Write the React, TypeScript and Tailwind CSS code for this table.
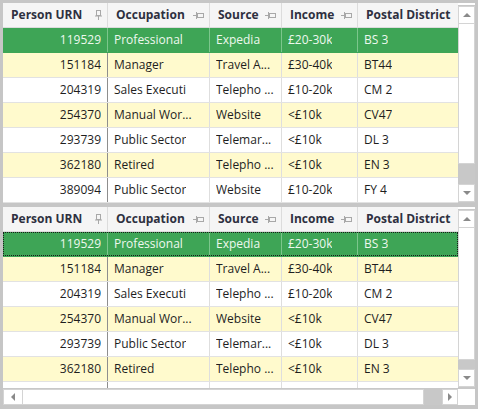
import React from "react";

const rows = [
  ["119529", "Professional", "Expedia", "£20-30k", "BS 3"],
  ["151184", "Manager", "Travel A...", "£30-40k", "BT44"],
  ["204319", "Sales Executi", "Telepho ...", "£10-20k", "CM 2"],
  ["254370", "Manual Wor...", "Website", "<£10k", "CV47"],
  ["293739", "Public Sector", "Telemar...", "<£10k", "DL 3"],
  ["362180", "Retired", "Telepho ...", "<£10k", "EN 3"],
  ["389094", "Public Sector", "Website", "£10-20k", "FY 4"],
];

const columns = [
  { title: "Person URN", width: "w-[105px]", pinned: true },
  { title: "Occupation", width: "w-[102px]", pinned: false },
  { title: "Source", width: "w-[72px]", pinned: false },
  { title: "Income", width: "w-[76px]", pinned: false },
  { title: "Postal District", width: "w-[112px]", pinned: false },
];

const font = { fontFamily: '"Open Sans", "Noto Sans", sans-serif' };

const PinDown = () => (
  <svg width="7" height="10" viewBox="0 0 7 10" className="shrink-0">
    <rect x="1.5" y="0.5" width="4" height="5" fill="none" stroke="#a8a8a8" />
    <line x1="0" y1="6" x2="7" y2="6" stroke="#a8a8a8" />
    <line x1="3.5" y1="6" x2="3.5" y2="10" stroke="#a8a8a8" />
  </svg>
);

const PinSide = () => (
  <svg width="11" height="7" viewBox="0 0 11 7" className="shrink-0">
    <line x1="0" y1="3.5" x2="3" y2="3.5" stroke="#a8a8a8" />
    <line x1="3.5" y1="0" x2="3.5" y2="7" stroke="#a8a8a8" />
    <rect x="4.5" y="1.5" width="6" height="4" fill="none" stroke="#a8a8a8" />
  </svg>
);

const Arrow = ({ dir }: { dir: "up" | "down" | "left" | "right" }) => {
  const pts = {
    up: "0,4 4,0 8,4",
    down: "0,0 8,0 4,4",
    left: "4,0 4,8 0,4",
    right: "0,0 4,4 0,8",
  }[dir];
  const vertical = dir === "up" || dir === "down";
  return (
    <svg width={vertical ? 8 : 4} height={vertical ? 4 : 8} viewBox={vertical ? "0 0 8 4" : "0 0 4 8"}>
      <polygon points={pts} fill="#8a8a8a" />
    </svg>
  );
};

const Header = () => (
  <div className="flex h-[25px] shrink-0 border-b border-[#dcdcdc] bg-[#f5f5f5]">
    {columns.map((c) => (
      <div
        key={c.title}
        className={`${c.width} shrink-0 flex items-center justify-between pl-[8px] pr-[5px] border-r border-[#dcdcdc] text-[12px] font-bold text-[#2e3040]`}
      >
        <span className="whitespace-nowrap">{c.title}</span>
        {c.title !== "Postal District" && (c.pinned ? <PinDown /> : <PinSide />)}
      </div>
    ))}
  </div>
);

const Row = ({ r, i, focused }: { r: string[]; i: number; focused?: boolean }) => {
  const selected = i === 0;
  const bg = selected ? "bg-[#3ea556]" : i % 2 === 1 ? "bg-[#fffacd]" : "bg-white";
  const text = selected ? "text-[#eef8ee]" : "text-[#1e1e1e]";
  const line = selected ? "border-[#7cc68c]" : "border-[#dedede]";
  return (
    <div
      className={`relative flex h-[25px] shrink-0 border-b ${selected ? "border-[#3ea556]" : "border-[#e2e2e2]"} ${bg} ${text} text-[12px]`}
    >
      {r.map((v, j) => (
        <div
          key={j}
          className={`${columns[j].width} shrink-0 flex items-center px-[6px] border-r ${
            j === 0 ? (selected ? "border-[#7cc68c]" : "border-[#8e8e8e]") : line
          } ${j === 0 ? "justify-end" : ""}`}
        >
          <span className="overflow-hidden whitespace-nowrap">{v}</span>
        </div>
      ))}
      {focused && (
        <div className="absolute inset-0 border border-dotted border-[#1a1a1a]" />
      )}
    </div>
  );
};

const VScroll = ({ thumbEnd }: { thumbEnd: string }) => (
  <div className="w-[17px] shrink-0 flex flex-col bg-[#c8c8c8]">
    <div className="h-[2px] shrink-0 bg-white" />
    <div className="h-[18px] mt-[1px] shrink-0 bg-white border border-[#d4d4d4] flex items-center justify-center">
      <Arrow dir="up" />
    </div>
    <div className={`${thumbEnd} shrink-0 bg-white border-x border-b border-[#d4d4d4]`} />
    <div className="flex-1" />
    <div className="h-[18px] shrink-0 bg-white border border-[#d4d4d4] flex items-center justify-center mb-[1px]">
      <Arrow dir="down" />
    </div>
  </div>
);

const Grid1 = () => (
  <div className="flex h-[200px] bg-white">
    <div className="flex-1 overflow-hidden flex flex-col">
      <Header />
      {rows.map((r, i) => (
        <Row key={i} r={r} i={i} />
      ))}
    </div>
    <VScroll thumbEnd="h-[140px]" />
  </div>
);

const Grid2 = () => (
  <div className="flex flex-col h-[198px] bg-white">
    <div className="flex flex-1 min-h-0">
      <div className="flex-1 overflow-hidden flex flex-col">
        <Header />
        {rows.map((r, i) => (
          <Row key={i} r={r} i={i} focused={i === 0} />
        ))}
      </div>
      <VScroll thumbEnd="h-[132px]" />
    </div>
    <div className="flex h-[17px] shrink-0 bg-[#c8c8c8] border-t border-[#c8c8c8]">
      <div className="w-[20px] shrink-0 bg-white border border-[#d4d4d4] flex items-center justify-center">
        <Arrow dir="left" />
      </div>
      <div className="w-[401px] shrink-0 bg-white border-y border-r border-[#d4d4d4]" />
      <div className="flex-1" />
      <div className="w-[16px] shrink-0 bg-white border border-[#d4d4d4] flex items-center justify-center">
        <Arrow dir="right" />
      </div>
      <div className="w-[17px] shrink-0 bg-white" />
    </div>
  </div>
);

export default function App() {
  return (
    <div style={font} className="w-[478px] h-[409px] bg-[#c6c6c6] p-[3px] flex flex-col gap-[4px] overflow-hidden">
      <Grid1 />
      <Grid2 />
    </div>
  );
}
